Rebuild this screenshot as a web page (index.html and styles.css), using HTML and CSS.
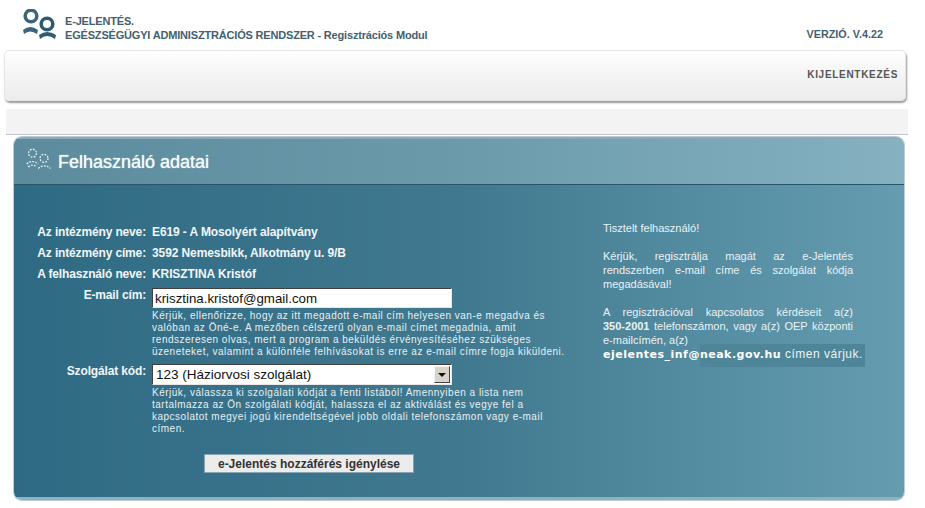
FILE: index.html
```html
<!DOCTYPE html>
<html lang="hu">
<head>
    <meta charset="UTF-8">
    <title>E-Jelentés - Regisztrációs Modul</title>
    <link rel="stylesheet" href="styles.css">
</head>
<body>
    <div class="top">
        <svg class="logo" viewBox="0 0 36 30" width="36" height="30">
            <circle cx="9" cy="7" r="5.800" fill="none" stroke="#3d6478" stroke-width="3.600"/>
            <circle cx="25" cy="15" r="5.800" fill="none" stroke="#2f5b70" stroke-width="3.600"/>
            <path d="M1 21 Q8 15 16 21 L15 25 Q8 20 2 25 Z" fill="#3d6478"/>
            <path d="M17 26 Q25 20 34 26 L33 30 Q25 24 18 30 Z" fill="#2f5b70"/>
        </svg>
        <div class="top-title">
            <div>E-JELENTÉS.</div>
            <div>EGÉSZSÉGÜGYI ADMINISZTRÁCIÓS RENDSZER - Regisztrációs Modul</div>
        </div>
        <div class="version">VERZIÓ. V.4.22</div>
    </div>

    <div class="navbar">
        <a class="logout">KIJELENTKEZÉS</a>
    </div>

    <div class="strip"></div>

    <div class="panel">
        <div class="panel-head">
            <svg class="panel-icon" viewBox="0 0 36 30" width="26" height="24">
                <g fill="none" stroke="#e8f2f5" stroke-width="1.800" stroke-dasharray="2.500 1.800">
                    <circle cx="9" cy="7" r="5.500"/>
                    <circle cx="25" cy="14" r="5.500"/>
                    <path d="M1 22 Q9 15 17 22"/>
                    <path d="M17 28 Q25 21 34 28"/>
                    <path d="M3 26 Q9 21 15 26"/>
                </g>
            </svg>
            <h1>Felhasználó adatai</h1>
        </div>
        <div class="panel-body">
            <div class="form">
                <div class="row">
                    <div class="label">Az intézmény neve:</div>
                    <div class="value">E619 - A Mosolyért alapítvány</div>
                </div>
                <div class="row">
                    <div class="label">Az intézmény címe:</div>
                    <div class="value">3592 Nemesbikk, Alkotmány u. 9/B</div>
                </div>
                <div class="row">
                    <div class="label">A felhasználó neve:</div>
                    <div class="value">KRISZTINA Kristóf</div>
                </div>
                <div class="row row-field">
                    <div class="label">E-mail cím:</div>
                    <div class="field">
                        <input class="text-input" type="text" value="krisztina.kristof@gmail.com">
                        <p class="hint">Kérjük, ellenőrizze, hogy az itt megadott e-mail cím helyesen van-e megadva és<br>valóban az Öné-e. A mezőben célszerű olyan e-mail címet megadnia, amit<br>rendszeresen olvas, mert a program a beküldés érvényesítéséhez szükséges<br>üzeneteket, valamint a különféle felhívásokat is erre az e-mail címre fogja kiküldeni.</p>
                    </div>
                </div>
                <div class="row row-field row-select">
                    <div class="label">Szolgálat kód:</div>
                    <div class="field">
                        <div class="select-wrap">
                            <select class="select-input">
                                <option>123 (Háziorvosi szolgálat)</option>
                            </select>
                            <span class="select-btn"></span>
                        </div>
                        <p class="hint">Kérjük, válassza ki szolgálati kódját a fenti listából! Amennyiben a lista nem<br>tartalmazza az Ön szolgálati kódját, halassza el az aktiválást és vegye fel a<br>kapcsolatot megyei jogú kirendeltségével jobb oldali telefonszámon vagy e-mail<br>címen.</p>
                    </div>
                </div>
                <button class="submit-btn">e-Jelentés hozzáférés igénylése</button>
            </div>
            <div class="notice">
                <p>Tisztelt felhasználó!</p>
                <p>Kérjük, regisztrálja magát az e-Jelentés rendszerben e-mail címe és szolgálat kódja megadásával!</p>
                <p>A regisztrációval kapcsolatos kérdéseit a(z) <b class="nowrap">350-2001</b> telefonszámon, vagy a(z) OEP központi <span class="nowrap">e-mailcímén,</span> a(z)</p>
                <div class="notice-mail"><b>ejelentes_inf@neak.gov.hu</b> címen várjuk.</div>
            </div>
        </div>
    </div>
</body>
</html>
```

FILE: styles.css
```css
* {
    margin: 0;
    padding: 0;
    box-sizing: border-box;
}

body {
    font-family: "Liberation Sans", Arial, sans-serif;
    background: white;
    color: #333;
    height: 508px;
    overflow: hidden;
}

.top {
    height: 50px;
    padding: 9px 42px 0 22px;
    display: flex;
    align-items: flex-start;
}

.logo {
    flex: none;
}

.top-title {
    margin: 5px 0 0 7px;
    font-size: 11px;
    font-weight: bold;
    line-height: 14px;
    letter-spacing: -0.18px;
    color: #44606f;
    flex: 1;
}

.version {
    margin-top: 18px;
    font-size: 10.800px;
    font-weight: bold;
    line-height: 14px;
    color: #44606f;
}

.navbar {
    margin: 0 19px 0 4px;
    height: 51px;
    border: 1px solid #e6e6e6;
    border-radius: 5px;
    background: linear-gradient(#ffffff 0%, #f6f6f6 40%, #ececec 100%);
    box-shadow: 1px 2px 2px #9a9a9a;
    display: flex;
    justify-content: flex-end;
    padding: 17px 7px 0 0;
}

.logout {
    font-size: 10px;
    font-weight: bold;
    letter-spacing: 0.7px;
    line-height: 14px;
    color: #555;
}

.strip {
    margin: 8px 17px 0 6px;
    height: 26px;
    background: #f3f3f3;
    border-bottom: 1px solid #c4c2cc;
}

.panel {
    margin: 2px 21px 0 14px;
    height: 363px;
    border-radius: 8px;
    overflow: hidden;
    box-shadow: 0 0 0 1px #b9cdd6;
}

.panel-head {
    height: 47px;
    padding: 8px 0 0 12px;
    display: flex;
    align-items: flex-start;
    background: linear-gradient(90deg, #5b8b9c 0%, #6b9bab 50%, #85b1c1 100%);
    border-top: 2px solid #8fa9b5;
}

.panel-icon {
    flex: none;
}

.panel-head h1 {
    margin: 4px 0 0 6px;
    font-size: 18px;
    font-weight: normal;
    line-height: 22px;
    color: #f4f9fa;
    text-shadow: 0 0 1px #f4f9fa;
}

.panel-body {
    height: 316px;
    background: linear-gradient(90deg, #2f6a84 0%, #40798f 50%, #659cb0 100%);
    border-top: 1px solid #27566b;
    border-bottom: 3px solid #8fb0bf;
    padding-top: 40px;
    display: flex;
    color: white;
}

.form {
    width: 589px;
    flex: none;
    display: flex;
    flex-direction: column;
}

.row {
    display: flex;
    height: 21px;
    font-size: 12px;
    font-weight: bold;
    line-height: 14px;
}

.label {
    width: 132px;
    flex: none;
    text-align: right;
    color: #f2f6f8;
    letter-spacing: -0.15px;
}

.value {
    margin-left: 6px;
    color: #f2f6f8;
    letter-spacing: -0.1px;
}

.row-field {
    height: auto;
}

.row-select {
    margin-top: 6px;
}

.field {
    margin-left: 6px;
    width: 420px;
}

.text-input {
    display: block;
    width: 300px;
    height: 20px;
    padding: 0 2px;
    font-family: "Liberation Sans", Arial, sans-serif;
    font-size: 13.300px;
    color: #111;
    background: white;
    border: 1px solid;
    border-color: #404040 #e8e8e8 #e8e8e8 #404040;
    outline: none;
}

.hint {
    font-size: 10px;
    font-weight: normal;
    line-height: 12px;
    letter-spacing: 0.5px;
    color: #e6f0f3;
    margin-top: 2px;
    white-space: nowrap;
}

.select-wrap {
    position: relative;
    width: 300px;
    height: 21px;
}

.select-input {
    display: block;
    width: 100%;
    height: 100%;
    padding-left: 3px;
    appearance: none;
    font-family: "Liberation Sans", Arial, sans-serif;
    font-size: 13.500px;
    color: #111;
    background: white;
    border: 1px solid;
    border-color: #404040 #e8e8e8 #e8e8e8 #404040;
    border-radius: 0;
}

.select-btn {
    position: absolute;
    top: 2px;
    right: 2px;
    width: 16px;
    height: 17px;
    background: #d8d4cc;
    border: 1px solid;
    border-color: #f4f4f4 #444 #444 #f4f4f4;
}

.select-btn:after {
    content: "";
    position: absolute;
    left: 3px;
    top: 6px;
    border-left: 4px solid transparent;
    border-right: 4px solid transparent;
    border-top: 4px solid #111;
}

.submit-btn {
    width: 210px;
    height: 19px;
    margin: 19px 0 0 190px;
    font-family: "Liberation Sans", Arial, sans-serif;
    font-size: 12px;
    font-weight: bold;
    color: #333;
    background: #ececec;
    border: 1px solid #8aa4b1;
}

.notice {
    width: 250px;
    flex: none;
    margin-top: -4px;
    font-size: 11px;
    line-height: 14px;
    color: #eaf3f6;
    text-align: justify;
}

.notice p {
    margin-bottom: 14px;
}

.notice p:nth-child(3) {
    margin-bottom: 0;
}

.nowrap {
    white-space: nowrap;
}

.notice-mail {
    width: 262px;
    height: 23px;
    margin-top: -3px;
    padding-top: 3px;
    font-size: 12px;
    line-height: 14px;
    letter-spacing: 0.5px;
    white-space: nowrap;
    background: linear-gradient(90deg, transparent 0, transparent 37%, #4f8599 37%, #4f8599 100%);
}

.notice-mail b {
    font-family: "DejaVu Sans", sans-serif;
    font-size: 11px;
    color: white;
}
```
